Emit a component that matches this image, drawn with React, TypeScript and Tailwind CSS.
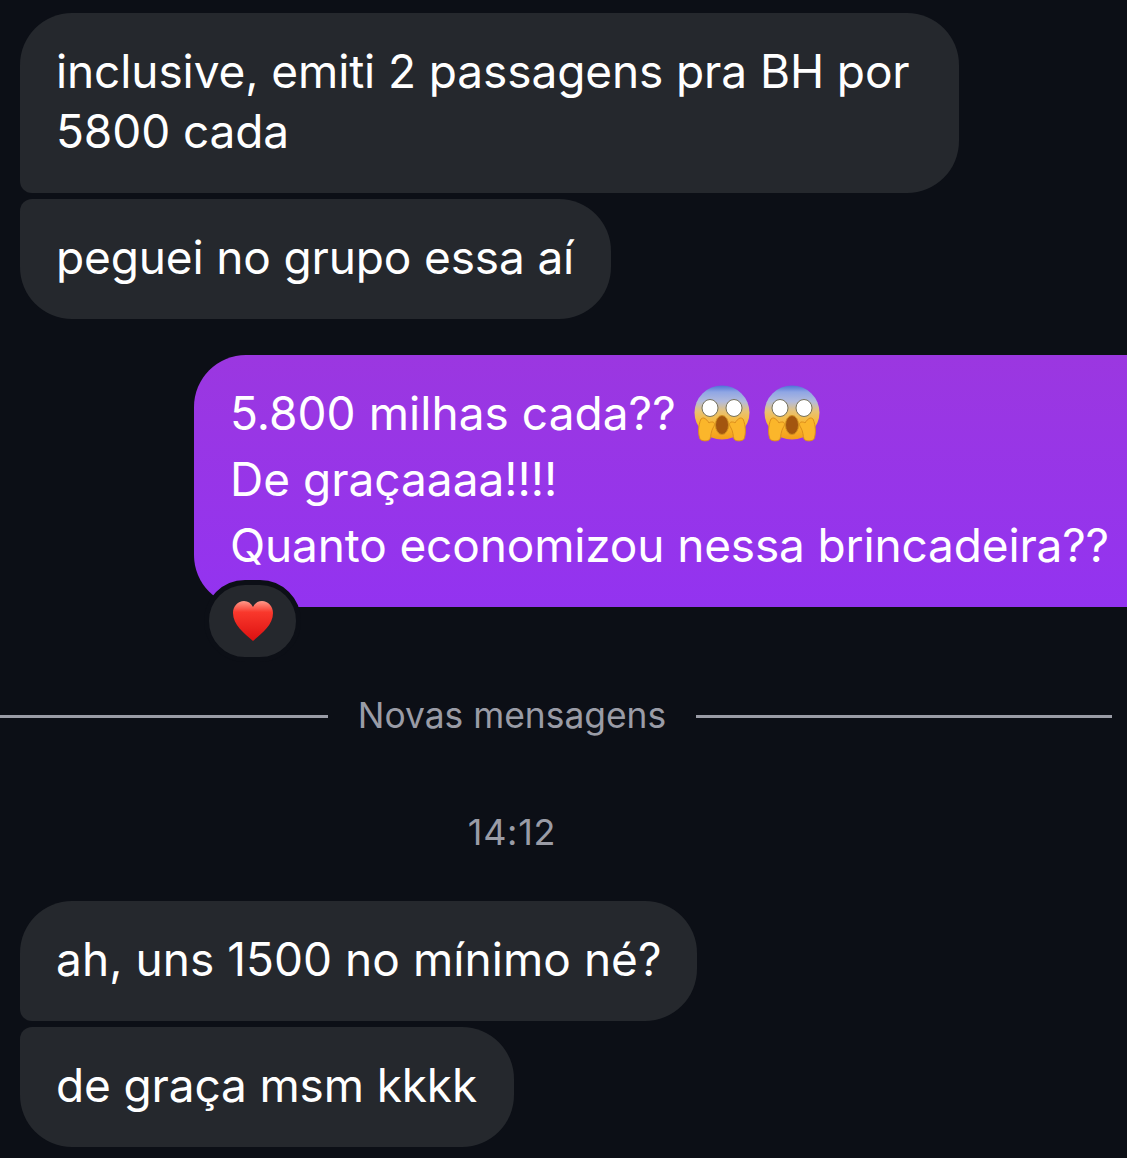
import React from 'react';

// Screaming face emoji, drawn because no colour emoji font is installed
function ScreamEmoji({ id }: { id: string }) {
  return (
    <svg width="56" height="57" viewBox="0 0 56 57" className="shrink-0">
      <defs>
        <linearGradient id={id} x1="0" y1="0" x2="0" y2="1">
          <stop offset="0" stopColor="#4f72d6" />
          <stop offset="0.12" stopColor="#8fa6e4" />
          <stop offset="0.3" stopColor="#b3bbdc" />
          <stop offset="0.48" stopColor="#e8c273" />
          <stop offset="0.72" stopColor="#fbb92c" />
          <stop offset="1" stopColor="#f39c1a" />
        </linearGradient>
      </defs>
      <ellipse cx="28" cy="27.5" rx="27.5" ry="27" fill={`url(#${id})`} />
      <ellipse cx="16" cy="23" rx="8" ry="8.5" fill="#fff" stroke="#74705a" strokeWidth="1" />
      <ellipse cx="40" cy="23" rx="8" ry="8.5" fill="#fff" stroke="#74705a" strokeWidth="1" />
      <ellipse cx="28" cy="40" rx="6.5" ry="9.5" fill="#a3560f" stroke="#d08f20" strokeWidth="1" />
      <path d="M7 34C4 41 4 49 6 54c1 2 8 3 10 0 1-3 1-8 3-11 2-3 2-5 0-6-2 0-3 0-4 1-1-2-3-4-5-5-1 0-2 0-3 1z" fill="#fbb62b" stroke="#dc8d1c" strokeWidth="1" />
      <path d="M49 34c3 7 3 15 1 20-1 2-8 3-10 0-1-3-1-8-3-11-2-3-2-5 0-6 2 0 3 0 4 1 1-2 3-4 5-5 1 0 2 0 3 1z" fill="#fbb62b" stroke="#dc8d1c" strokeWidth="1" />
    </svg>
  );
}

function HeartEmoji() {
  return (
    <svg width="42" height="42" viewBox="0 0 42 42">
      <defs>
        <linearGradient id="heartFill" x1="0" y1="0" x2="0" y2="1">
          <stop offset="0" stopColor="#ff9a8a" />
          <stop offset="0.28" stopColor="#f9382c" />
          <stop offset="1" stopColor="#dd1010" />
        </linearGradient>
      </defs>
      <path d="M21 41C12 33 1 25 1 13 1 6 6 1 12 1c4 0 7 2 9 6 2-4 5-6 9-6 6 0 11 5 11 12 0 12-11 20-20 28z" fill="url(#heartFill)" />
    </svg>
  );
}

function IncomingBubble({ children, className }: { children: React.ReactNode; className: string }) {
  return (
    <div className={`ml-5 bg-[#25282d] pt-[28px] pb-[32px] pl-[36px] text-white ${className}`}>
      {children}
    </div>
  );
}

export default function App() {
  return (
    <div className="h-[1158px] w-[1127px] overflow-hidden bg-[#0c0f16] pt-[13px] font-['Inter',sans-serif] text-[46px] leading-[60px] tracking-[-0.15px]">
      <IncomingBubble className="w-[939px] rounded-[52px] rounded-bl-[12px] tracking-[-0.1px]">
        inclusive, emiti 2 passagens pra BH por
        <br />
        5800 cada
      </IncomingBubble>
      <IncomingBubble className="mt-1.5 w-fit rounded-[52px] rounded-tl-[12px] pr-[37px]">peguei no grupo essa aí</IncomingBubble>

      {/* Sent message with reaction */}
      <div className="relative mt-9 ml-[194px] h-[252px] w-[990px]">
        <div className="h-full rounded-[52px] bg-gradient-to-b from-[#9b37e0] to-[#9333f0] pt-[25px] pl-[36px] leading-[66px] text-white">
          <div className="flex items-center gap-[18px] tracking-[0.05px]">
            <span>5.800 milhas cada??</span>
            <span className="flex gap-[14px]">
              <ScreamEmoji id="scream1" />
              <ScreamEmoji id="scream2" />
            </span>
          </div>
          <div className="tracking-normal">De graçaaaa!!!!</div>
          <div>Quanto economizou nessa brincadeira??</div>
        </div>
        <div className="absolute top-[225px] left-[10px] flex h-[82px] w-[97px] items-center justify-center rounded-full border-[5px] border-[#0c0f16] bg-[#25282d]">
          <HeartEmoji />
        </div>
      </div>

      {/* Divider */}
      <div className="mt-[91px] flex h-9 items-center text-[35.4px] leading-9 tracking-normal text-[#9a9ca6]">
        <div className="h-[3px] w-[328px] bg-[#9a9ca6]" />
        <span className="w-[368px] text-center">Novas mensagens</span>
        <div className="h-[3px] w-[416px] bg-[#9a9ca6]" />
      </div>

      <div className="mt-[80px] w-[1024px] text-center text-[36px] leading-9 tracking-[0.7px] text-[#9a9ca6]">14:12</div>

      <IncomingBubble className="mt-[51px] w-fit rounded-[52px] rounded-bl-[12px] pr-[35px] tracking-[0.05px]">ah, uns 1500 no mínimo né?</IncomingBubble>
      <IncomingBubble className="mt-1.5 w-fit rounded-[52px] rounded-tl-[12px] pr-[37px]">de graça msm kkkk</IncomingBubble>
    </div>
  );
}
